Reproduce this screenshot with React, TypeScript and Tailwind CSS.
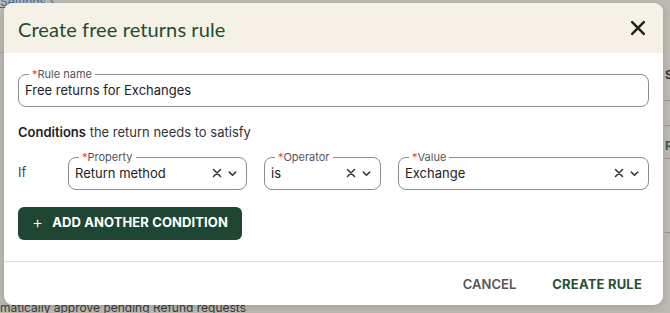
import React from "react";

function XIcon({ className = "" }: { className?: string }) {
  return (
    <svg viewBox="0 0 12 12" className={className} fill="none" stroke="currentColor" strokeWidth="1.5" strokeLinecap="round">
      <path d="M2.5 2.5l7 7M9.5 2.5l-7 7" />
    </svg>
  );
}

function Chevron({ className = "" }: { className?: string }) {
  return (
    <svg viewBox="0 0 12 12" className={className} fill="none" stroke="currentColor" strokeWidth="1.6" strokeLinecap="round" strokeLinejoin="round">
      <path d="M2.5 4.5L6 8l3.5-3.5" />
    </svg>
  );
}

function Field({ label, value, width, select = true }: { label: string; value: string; width: string; select?: boolean }) {
  return (
    <div className={`relative h-[33px] rounded-[8px] border border-[#8c8c8c] flex items-center pl-[6px] pr-[8px] ${width}`}>
      <div className="absolute -top-[8px] left-[10px] bg-white px-[3px] text-[11px] leading-[14px] text-[#555]">
        <span className="text-[#e0453a]">*</span>
        {label}
      </div>
      <span className="flex-1 text-[13px] text-[#222] pt-[1px]">{value}</span>
      {select && (
        <div className="flex items-center gap-[4px] text-[#333]">
          <XIcon className="w-[12px] h-[12px]" />
          <Chevron className="w-[11px] h-[11px]" />
        </div>
      )}
    </div>
  );
}

export default function App() {
  return (
    <div className="relative w-[670px] h-[313px] overflow-hidden bg-[#bcbab3]" style={{ fontFamily: "Inter, 'Noto Sans', sans-serif" }}>
      {/* background page fragments */}
      <div className="absolute left-0 top-[-7px] text-[12px] text-[#3b6ea0] underline">Settings ›</div>
      <div className="absolute left-0 top-[52px] w-[4px] h-[1px] bg-[#a5a39c]" />
      <div className="absolute left-0 top-[299px] text-[12px] text-[#3a3a3a] whitespace-nowrap">matically approve pending Refund requests</div>
      <div className="absolute left-[665px] top-[66px] text-[12px] font-bold text-[#3a3a3a]">S</div>
      <div className="absolute left-[665px] top-[100px] w-[5px] h-[1px] bg-[#9a9891]" />
      <div className="absolute left-[665px] top-[125px] w-[5px] h-[1px] bg-[#9a9891]" />
      <div className="absolute left-[665px] top-[137px] text-[12px] font-bold text-[#2f5d55]">R</div>
      <div className="absolute left-[665px] top-[158px] w-[5px] h-[1px] bg-[#9a9891]" />
      <div className="absolute left-[665px] top-[232px] w-[5px] h-[1px] bg-[#9a9891]" />

      <div className="absolute left-[4px] top-[3px] w-[659px] h-[302px] rounded-[9px] bg-white flex flex-col overflow-hidden shadow-[0_2px_8px_rgba(0,0,0,0.15)]">
        <div className="h-[50px] bg-[#f5f1e6] flex items-center justify-between pl-[14px] pr-[15px]">
          <h1 className="text-[20px] text-[#1f4b35] tracking-[0.1px] pt-[1px]" style={{ fontFamily: "Lato, 'Noto Sans', sans-serif" }}>
            Create free returns rule
          </h1>
          <XIcon className="w-[20px] h-[20px] text-[#222]" />
        </div>

        <div className="flex flex-col px-[14px] pt-[21px]">
          <Field label="Rule name" value="Free returns for Exchanges" width="w-[631px]" select={false} />
          <div className="mt-[16px] text-[13px] text-[#333]">
            <span className="font-semibold text-[#222]">Conditions</span> the return needs to satisfy
          </div>
          <div className="mt-[14px] flex items-center">
            <span className="w-[50px] text-[13px] text-[#444]">If</span>
            <Field label="Property" value="Return method" width="w-[179px]" />
            <div className="w-[17px]" />
            <Field label="Operator" value="is" width="w-[117px]" />
            <div className="w-[17px]" />
            <Field label="Value" value="Exchange" width="w-[251px]" />
          </div>
          <button className="mt-[17px] w-[224px] h-[33px] rounded-[6px] bg-[#1e4632] text-white text-[13px] font-bold tracking-[0.1px] flex items-center justify-center gap-[9px]">
            <span className="text-[17px] font-light leading-none -mt-[2px]">+</span>
            ADD ANOTHER CONDITION
          </button>
        </div>

        <div className="mt-[21px] h-px bg-[#dedede]" />
        <div className="flex-1 flex items-center justify-end pr-[21px] gap-[36px] pt-[3px]">
          <span className="text-[13px] font-semibold tracking-[0px] text-[#555]">CANCEL</span>
          <span className="text-[13px] font-bold tracking-[0.2px] text-[#245239]">CREATE RULE</span>
        </div>
      </div>
    </div>
  );
}
